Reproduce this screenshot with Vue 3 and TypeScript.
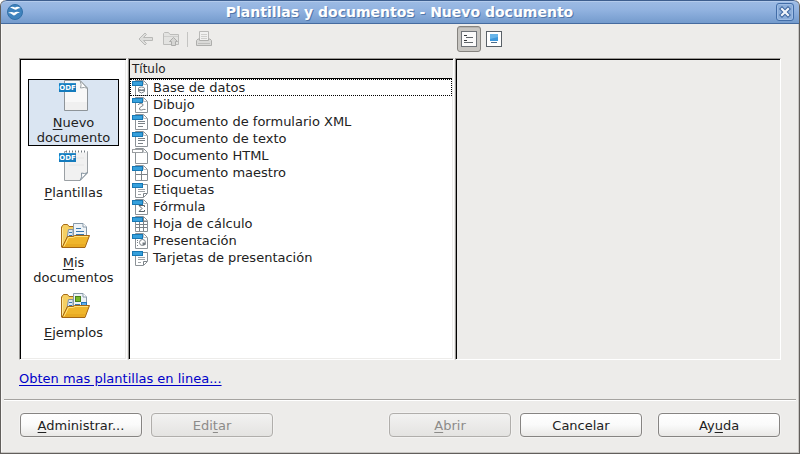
<script setup lang="ts">
import { ref } from 'vue'

interface Category {
  id: string
  key: string
  rest: string
  secondLine?: string
}
interface DocType {
  name: string
  kind: string
}

const categories: Category[] = [
  { id: 'new', key: 'N', rest: 'uevo', secondLine: 'documento' },
  { id: 'templates', key: 'P', rest: 'lantillas' },
  { id: 'documents', key: 'M', rest: 'is', secondLine: 'documentos' },
  { id: 'samples', key: 'E', rest: 'jemplos' },
]

const docTypes: DocType[] = [
  { name: 'Base de datos', kind: 'database' },
  { name: 'Dibujo', kind: 'drawing' },
  { name: 'Documento de formulario XML', kind: 'text' },
  { name: 'Documento de texto', kind: 'text' },
  { name: 'Documento HTML', kind: 'html' },
  { name: 'Documento maestro', kind: 'master' },
  { name: 'Etiquetas', kind: 'label' },
  { name: 'Fórmula', kind: 'formula' },
  { name: 'Hoja de cálculo', kind: 'sheet' },
  { name: 'Presentación', kind: 'slides' },
  { name: 'Tarjetas de presentación', kind: 'label' },
]

const category = ref('new')
const focused = ref(0)
const view = ref<'details' | 'preview'>('details')
</script>

<template>
  <div class="window">
    <header class="titlebar">
      <svg class="app-icon" viewBox="0 0 16 16" aria-hidden="true">
        <circle cx="8" cy="8" r="7.5" fill="#3f83bd" stroke="#3270a8" />
        <path d="M3 3.500Q5.500 2 8 3.500Q10.500 2 13.500 4Q11 4.400 9.500 5.500Q8 6 7 5.200Q5 4.200 3 3.500Z" fill="#fff" />
        <path d="M1 9Q4.500 7 7 8.800Q9.500 6.800 13 8.500Q10 9 8.500 10.800Q6.500 12.300 5 10.300Q3.500 9 1 9Z" fill="#fff" />
      </svg>
      <h1>Plantillas y documentos - Nuevo documento</h1>
      <button class="close" type="button" aria-label="Cerrar">
        <svg viewBox="0 0 12 12" aria-hidden="true">
          <path d="M3 3L9 9M9 3L3 9" stroke="#3c659f" stroke-width="4.200" stroke-linecap="square" />
          <path d="M3 3L9 9M9 3L3 9" stroke="#f1f5fb" stroke-width="2.200" stroke-linecap="square" />
        </svg>
      </button>
    </header>

    <main class="body">
      <div class="tools nav-tools">
        <button type="button" disabled aria-label="Atrás">
          <svg viewBox="0 0 18 18" aria-hidden="true">
            <path d="M2 9L8 3L9.500 4.500L6.500 7.500H15.500V10.500H6.500L9.500 13.500L8 15Z" fill="#dededc" stroke="#b9b9b7" />
          </svg>
        </button>
        <button type="button" disabled aria-label="Subir un nivel">
          <svg viewBox="0 0 18 18" aria-hidden="true">
            <path d="M1.500 14.500V3.500L2.500 2.500H6.500L8 4.500H16.500V14.500Z" fill="#e3e3e1" stroke="#bcbcba" />
            <path d="M2 6.500H16" stroke="#cececc" />
            <path d="M11.500 7.500L15.500 11.500H13.500V15.500H9.500V11.500H7.500Z" fill="#d6d6d4" stroke="#adadab" />
          </svg>
        </button>
        <span class="divider"></span>
        <button type="button" disabled aria-label="Imprimir">
          <svg viewBox="0 0 18 18" aria-hidden="true">
            <path d="M4.500 10V1.500H13.500V10" fill="#f1f1f0" stroke="#b9b9b7" />
            <path d="M6 4.500H12M6 6.500H12M6 8.500H12" stroke="#cfcfcd" />
            <path d="M1.500 10.500L3 9H4.500V10.500H13.500V9H15L16.500 10.500V15.500H1.500Z" fill="#dadad8" stroke="#aeaeac" />
            <path d="M3 13.500H15" stroke="#bebebc" />
          </svg>
        </button>
      </div>
      <div class="tools view-tools">
        <button type="button" :class="{ pressed: view === 'details' }" aria-label="Detalles" @click="view = 'details'">
          <svg viewBox="0 0 16 16" aria-hidden="true">
            <rect x="0.500" y="0.500" width="15" height="15" fill="#fafafa" stroke="#6e7378" />
            <path d="M3 4.500H6M3 9.500H6" stroke="#35393c" />
            <path d="M5 6.500H12M3 11.500H12" stroke="#61676b" />
          </svg>
        </button>
        <button type="button" :class="{ pressed: view === 'preview' }" aria-label="Vista previa" @click="view = 'preview'">
          <svg viewBox="0 0 16 16" aria-hidden="true">
            <rect x="0.500" y="0.500" width="15" height="15" fill="#fff" stroke="#596067" />
            <rect x="4" y="3" width="8" height="7" fill="#3e98dc" />
            <path d="M4 3H12V6L4 8Z" fill="#67b5ea" />
            <path d="M5 11.500H11" stroke="#4b6d8c" />
          </svg>
        </button>
      </div>

      <nav class="pane categories">
        <button
          v-for="item in categories"
          :key="item.id"
          type="button"
          class="category"
          :class="{ selected: item.id === category }"
          @click="category = item.id"
        >
          <svg v-if="item.id === 'new' || item.id === 'templates'" viewBox="0 0 32 32" aria-hidden="true">
            <template v-if="item.id === 'new'">
              <path d="M6.500 0.500H22L29.500 8V30.500H6.500Z" fill="#f8f8f8" stroke="#8e9499" />
              <path d="M7 22H29V30H7Z" fill="#f0f0f0" />
              <path d="M22 0.500Q24 5 22.500 8Q27 6.500 29.500 8.500Z" fill="#fff" stroke="#9aa0a4" />
            </template>
            <template v-else>
              <path d="M6.500 1.500H29.500V23L22 30.500H6.500Z" fill="#f1f1f1" stroke="#9ba0a4" />
              <path d="M8 1.500H29" stroke="#fff" stroke-width="2" />
              <path d="M8 1.500H29" stroke="#737a80" stroke-width="2" stroke-dasharray="1 2" />
              <path d="M29.500 22.500Q27 24.500 23.500 23Q24.500 27 22 30.500Z" fill="#fff" stroke="#8795a1" />
              <path d="M11 8H26M11 15H26" stroke="#e5e5e5" />
            </template>
            <rect x="1" y="3" width="17" height="9" fill="#147bbd" />
            <path d="M1 3.500H18" stroke="#318fcb" />
            <text x="9.500" y="10" text-anchor="middle" class="odf">ODF</text>
          </svg>
          <svg v-else viewBox="0 0 32 32" aria-hidden="true">
            <path d="M3.500 27V7L5.500 4.500H9.500L11 6.500H17V27Z" fill="#f5cf63" stroke="#a76c16" />
            <path d="M4.500 26V8" stroke="#ffe89b" />
            <path d="M10.500 9.500H15V24H8Z" fill="#e0eaf3" stroke="#8294a4" />
            <path d="M15.500 3.500H25L28.500 7V20H15.500Z" fill="#eef3f7" stroke="#8799a8" />
            <path d="M25 3.500V7H28.500" fill="#fff" stroke="#8799a8" />
            <template v-if="item.id === 'documents'">
              <path d="M18 8.500H23M18 11.500H26M18 14.500H26M11 12.500H14M11 15.500H14" stroke="#3b79ad" />
            </template>
            <template v-else>
              <rect x="17.500" y="6.500" width="5" height="5" fill="#76b72a" stroke="#48801d" />
              <rect x="23.500" y="12.500" width="5" height="5" fill="#5cadf0" stroke="#2876b7" />
              <path d="M17 14.500H22M11 12.500H14M11 15.500H14" stroke="#3b79ad" />
            </template>
            <path d="M4 27.500L9.500 16.500H15L16.500 15.500H31.500L27 27.500Z" fill="#efb52b" stroke="#a46513" />
            <path d="M6 26.500L10.500 17.500H15.500L17 16.500H30" fill="none" stroke="#ffe27c" />
            <path d="M8 24H27L26 27H6Z" fill="#e1a01a" opacity="0.500" />
          </svg>
          <span class="label">
            <span><u>{{ item.key }}</u>{{ item.rest }}</span>
            <span v-if="item.secondLine">{{ item.secondLine }}</span>
          </span>
        </button>
      </nav>

      <section class="pane list">
        <h2>Título</h2>
        <ul>
          <li v-for="(doc, index) in docTypes" :key="doc.name">
            <button type="button" :class="{ focused: index === focused }" @click="focused = index">
              <svg viewBox="0 0 16 16" aria-hidden="true">
                <path
                  v-if="doc.kind === 'label'"
                  d="M3.500 2.500H15.500V11.500L11.500 15.500H3.500Z"
                  fill="#fff"
                  stroke="#8c9297"
                />
                <template v-else>
                  <path d="M3.500 0.500H11.500L15.500 4.500V15.500H3.500Z" fill="#fff" stroke="#8c9297" />
                  <path d="M11.500 1V4.500H15" fill="none" stroke="#b9bdc0" />
                </template>
                <g fill="none" stroke="#7b8288">
                  <template v-if="doc.kind === 'database'">
                    <ellipse cx="9.500" cy="8.500" rx="3" ry="1.500" />
                    <path d="M6.500 8.500V11.500Q9.500 14.500 12.500 11.500V8.500M6.500 10.500H12.500" />
                  </template>
                  <path v-else-if="doc.kind === 'drawing'" d="M6 8Q6.500 6.500 9 6.500Q11.500 6.500 11 8.500Q9 9.500 7.500 11Q7 13.500 9.500 13Q12 12 13.500 12.500" />
                  <path v-else-if="doc.kind === 'text'" d="M6 7.500H13M6 9.500H13M6 12.500H11" />
                  <path v-else-if="doc.kind === 'master'" d="M9.500 6V15M4 9.500H15" />
                  <template v-else-if="doc.kind === 'label'">
                    <path d="M6 7.500H13M6 9.500H13M6 12.500H9" stroke="#a0a5a9" />
                    <path d="M15 11.500H11.500V15" />
                  </template>
                  <path v-else-if="doc.kind === 'formula'" d="M12.500 8V6.500H7L10 9.500L7 12.500H12.500V11" stroke="#596269" />
                  <path v-else-if="doc.kind === 'sheet'" d="M7.500 5V15M11.500 1V15M4 5.500H15M4 8.500H15M4 11.500H15" />
                  <template v-else-if="doc.kind === 'slides'">
                    <circle cx="10.500" cy="9.500" r="3" />
                    <path d="M10.500 6.500V9.500H13.500V12H10.500Z" fill="#727a80" stroke="none" />
                    <path d="M5 7.500H6M5 9.500H6M5 12.500H6" />
                  </template>
                </g>
                <rect v-if="doc.kind === 'html'" x="0.500" y="1.500" width="10" height="3" fill="#fff" stroke="#999da0" />
                <template v-else>
                  <rect x="0" y="1" width="11" height="5" fill="#1878b4" />
                  <rect x="1" y="2" width="9" height="3" fill="#36a0dc" />
                </template>
              </svg>
              <span>{{ doc.name }}</span>
            </button>
          </li>
        </ul>
      </section>

      <section class="pane preview" aria-label="Vista previa"></section>
    </main>

    <p class="more"><a href="#plantillas">Obten mas plantillas en linea...</a></p>

    <footer class="actions">
      <button type="button"><u>A</u>dministrar...</button>
      <button type="button" disabled>Edi<u>t</u>ar</button>
      <button type="button" class="open" disabled><u>A</u>brir</button>
      <button type="button">Cancelar</button>
      <button type="button" class="help">Ay<u>u</u>da</button>
    </footer>
  </div>
</template>

<style>
body {
  margin: 0;
  background: #fff;
}
</style>

<style scoped>
* {
  box-sizing: border-box;
}
.window {
  display: flex;
  flex-direction: column;
  min-height: 100vh;
  border: 1px solid #625f5c;
  border-top: 0;
  border-radius: 6px 6px 0 0;
  background: #edecea;
  box-shadow: inset -1px -1px #c9c7c4, inset 1px 0 #f8f7f6;
  color: #222;
  font: 13px/15px "DejaVu Sans", sans-serif;
  overflow: hidden;
}
button {
  margin: 0;
  padding: 0;
  border: 0;
  background: none;
  color: inherit;
  font: inherit;
}
svg {
  display: block;
  flex: none;
}
u {
  text-underline-offset: 2px;
}
.titlebar {
  display: flex;
  align-items: center;
  height: 24px;
  padding: 0 5px 0 6px;
  border-top: 1px solid #3d5e8e;
  border-bottom: 1px solid #456b9f;
  border-radius: 6px 6px 0 0;
  background: linear-gradient(#9dbbe4, #92b3e0 40%, #749bcd);
  box-shadow: inset 0 1px #b3cbec;
}
.app-icon {
  width: 16px;
  height: 16px;
}
h1 {
  flex: 1;
  margin: 0;
  color: #fff;
  font-size: 14px;
  line-height: 20px;
  text-align: center;
  text-shadow: 1px 1px #5277aa;
}
.close {
  display: grid;
  place-items: center;
  width: 18px;
  height: 18px;
  border: 1px solid #426da8;
  border-radius: 3px;
  background: #8badd9;
  box-shadow: inset 0 0 0 1px #9fbde5;
}
.close svg {
  width: 12px;
  height: 12px;
}
.body {
  flex: 1;
  display: grid;
  grid-template-columns: 108px minmax(0, 1fr) minmax(0, 1fr);
  grid-template-rows: 34px minmax(302px, 1fr);
  column-gap: 1px;
  padding: 0 18px;
}
.tools {
  display: flex;
  align-items: center;
}
.nav-tools {
  grid-column: 2;
  gap: 7px;
  padding: 0 0 4px 9px;
}
.nav-tools svg {
  width: 18px;
  height: 18px;
}
.divider {
  width: 1px;
  height: 15px;
  background: #c4c4c2;
}
.view-tools {
  grid-column: 3;
  gap: 1px;
  padding: 0 0 4px 2px;
}
.view-tools button {
  display: grid;
  place-items: center;
  width: 24px;
  height: 26px;
  border: 1px solid transparent;
  border-radius: 3px;
}
.view-tools .pressed {
  border-color: #85837f;
  background: #c8c6c2;
  box-shadow: inset 0 1px #b4b2ae;
}
.view-tools svg {
  width: 16px;
  height: 16px;
}
.pane {
  border: 1px solid;
  border-color: #9c9a97 #fff #fff #9c9a97;
  background: #fff;
  box-shadow: inset 1px 1px #000, inset -1px -1px #edecea;
}
.categories {
  display: flex;
  flex-direction: column;
  gap: 3px;
  padding: 20px 7px 0 8px;
}
.category {
  display: flex;
  flex-direction: column;
  align-items: center;
  gap: 3px;
  height: 67px;
  border: 1px solid transparent;
}
.category.selected {
  border-color: #000;
  background: #dae5f2;
}
.category svg {
  width: 32px;
  height: 32px;
}
.label {
  display: flex;
  flex-direction: column;
  align-items: center;
}
.odf {
  fill: #fff;
  font: bold 7px "DejaVu Sans", sans-serif;
}
.list {
  padding: 1px;
}
h2 {
  margin: 0;
  padding: 0 2px;
  border-bottom: 1px solid #000;
  background: #edecea;
  font-size: 12px;
  font-weight: normal;
  line-height: 18px;
}
ul {
  margin: 0;
  padding: 0;
  list-style: none;
}
li button {
  display: flex;
  align-items: center;
  gap: 5px;
  width: 100%;
  height: 17px;
  padding: 0 2px;
  text-align: left;
  white-space: nowrap;
}
li .focused {
  outline: 1px dotted #000;
  outline-offset: -1px;
}
li svg {
  width: 16px;
  height: 16px;
}
.preview {
  background: #edecea;
}
.more {
  margin: 0;
  padding: 11px 18px 13px;
}
.more a {
  color: #0000c8;
  text-underline-offset: 2px;
}
.actions {
  display: flex;
  gap: 9px;
  margin: 0 3px;
  padding: 13px 16px 16px 16px;
  border-top: 1px solid #a5a3a0;
  box-shadow: inset 0 1px #fff;
}
.actions button {
  flex: 0 1 122px;
  height: 24px;
  border: 1px solid #868482;
  border-radius: 4px;
  background: linear-gradient(#fff, #fafafa 50%, #e9e8e6);
  box-shadow: 0 0 0 1px #f3f2f1;
}
.actions button:disabled {
  border-color: #b0aeab;
  background: linear-gradient(#f2f2f1, #e4e3e1);
  color: #8c8b89;
}
.actions .open {
  margin-left: auto;
}
.actions .help {
  margin-left: 7px;
}
</style>
